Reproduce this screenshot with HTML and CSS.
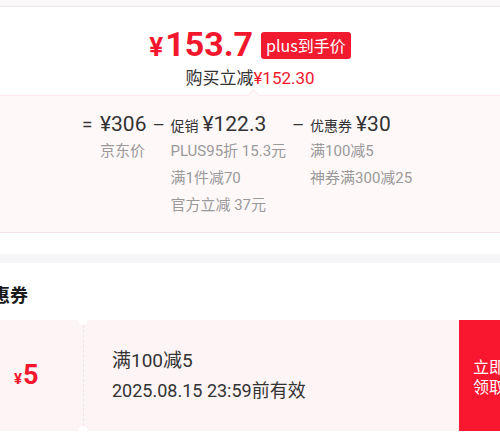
FILE: index.html
```html
<!DOCTYPE html>
<html lang="zh-CN">
<head>
<meta charset="utf-8">
<title>价格详情</title>
<link rel="stylesheet" href="styles.css">
</head>
<body>
<div class="top-strip"></div>
<section class="price-card">
  <div class="price-row">
    <span class="price"><span class="yen">¥</span>153.7</span>
    <span class="badge">plus到手价</span>
  </div>
  <div class="save">购买立减<span class="red">¥152.30</span></div>
  <div class="breakdown">
    <div class="col">
      <div class="head"><span class="op">=</span><span class="val">¥306</span></div>
      <div class="sub">京东价</div>
    </div>
    <div class="col">
      <div class="head"><span class="op">–</span><span class="label">促销</span><span class="val">¥122.3</span></div>
      <div class="sub">PLUS95折 15.3元</div>
      <div class="sub">满1件减70</div>
      <div class="sub">官方立减 37元</div>
    </div>
    <div class="col">
      <div class="head"><span class="op">–</span><span class="label">优惠券</span><span class="val">¥30</span></div>
      <div class="sub">满100减5</div>
      <div class="sub">神券满300减25</div>
    </div>
  </div>
</section>
<div class="gap"></div>
<section class="coupon-sec">
  <h2 class="title">优惠券</h2>
  <div class="coupon">
    <div class="amount"><span class="cy">¥</span><span class="cn">5</span></div>
    <div class="info">
      <div class="cond">满100减5</div>
      <div class="date">2025.08.15 23:59前有效</div>
    </div>
    <div class="btn">立即<br>领取</div>
  </div>
</section>
</body>
</html>
```
FILE: styles.css
```css
html, body {
  margin: 0;
  padding: 0;
}
body {
  width: 500px;
  height: 441px;
  overflow: hidden;
  background: #ffffff;
  font-family: Roboto, "Noto Sans CJK SC", sans-serif;
  color: #333333;
}
.top-strip {
  height: 6px;
  background: #faf9fa;
  border-bottom: 1px solid #f4e4e8;
}
.price-card {
  background: #ffffff;
  padding-top: 19px;
  padding-bottom: 21px;
}
.price-row {
  display: flex;
  justify-content: center;
  align-items: center;
  height: 38px;
  gap: 8px;
}
.price {
  color: #f3172e;
  font-size: 34px;
  font-weight: 700;
  line-height: 38px;
}
.yen {
  font-size: 26px;
  margin-right: 2px;
}
.badge {
  background: #f21a2f;
  color: #ffffff;
  font-family: "Noto Sans CJK SC", sans-serif;
  font-size: 16px;
  line-height: 27px;
  padding: 0 5px;
  border-radius: 3px;
  margin-top: 1px;
}
.save {
  margin-top: 2px;
  text-align: center;
  font-size: 17px;
  line-height: 22px;
  color: #333333;
  font-family: "Noto Sans CJK SC", sans-serif;
}
.save .red {
  color: #f3172e;
  font-family: Roboto, "Noto Sans CJK SC", sans-serif;
}
.breakdown {
  position: relative;
  margin-top: 6px;
  background: #fff8f9;
  border-top: 1px solid #fbe9ed;
  border-bottom: 1px solid #f7e2e6;
  padding: 14px 0 13px 82px;
  display: flex;
  gap: 6px;
}
.breakdown::before {
  content: "";
  position: absolute;
  top: -5px;
  left: 249px;
  width: 8px;
  height: 8px;
  background: #fff8f9;
  border-top: 1px solid #fbe9ed;
  border-left: 1px solid #fbe9ed;
  transform: rotate(45deg);
}
.col {
  display: flex;
  flex-direction: column;
}
.head {
  display: flex;
  align-items: baseline;
  height: 28px;
  line-height: 28px;
  white-space: nowrap;
}
.op {
  display: inline-block;
  width: 18px;
  font-size: 19px;
  color: #333333;
}
.label {
  font-family: "Noto Sans CJK SC", sans-serif;
  font-size: 14px;
  margin-right: 4px;
}
.val {
  font-size: 21px;
  color: #333333;
}
.sub {
  padding-left: 18px;
  font-size: 15px;
  line-height: 27px;
  color: #999999;
  white-space: nowrap;
}
.gap {
  height: 9px;
  background: #f6f6f9;
}
.coupon-sec {
  background: #ffffff;
  padding-top: 18px;
}
.title {
  margin: 0 0 13px -26px;
  font-family: "Noto Sans CJK SC", sans-serif;
  font-size: 18px;
  font-weight: 700;
  line-height: 26px;
  color: #1a1a1a;
}
.coupon {
  display: flex;
  height: 111px;
  margin-right: -19px;
  background: #fdf4f5;
}
.amount {
  position: relative;
  width: 84px;
  flex: none;
  display: flex;
  align-items: baseline;
  padding: 37px 0 0 14px;
  box-sizing: border-box;
  border-right: 1px dashed #f4e2e5;
  color: #f3172e;
}
.amount::before,
.amount::after {
  content: "";
  position: absolute;
  right: -5px;
  width: 10px;
  height: 10px;
  border-radius: 50%;
  background: #ffffff;
}
.amount::before {
  top: -5px;
}
.amount::after {
  bottom: -5px;
}
.cy {
  font-size: 15px;
  font-weight: 700;
  margin-right: 1px;
}
.cn {
  font-size: 27px;
  font-weight: 700;
  line-height: 36px;
}
.info {
  flex: 1;
  display: flex;
  flex-direction: column;
  justify-content: center;
  padding-left: 28px;
  color: #333333;
}
.cond {
  font-size: 19px;
  line-height: 30px;
}
.date {
  font-size: 18px;
  line-height: 30px;
}
.btn {
  width: 60px;
  flex: none;
  background: #f8172f;
  color: #ffffff;
  font-family: "Noto Sans CJK SC", sans-serif;
  font-size: 16px;
  line-height: 20px;
  display: flex;
  align-items: center;
  justify-content: center;
  text-align: center;
}
```
